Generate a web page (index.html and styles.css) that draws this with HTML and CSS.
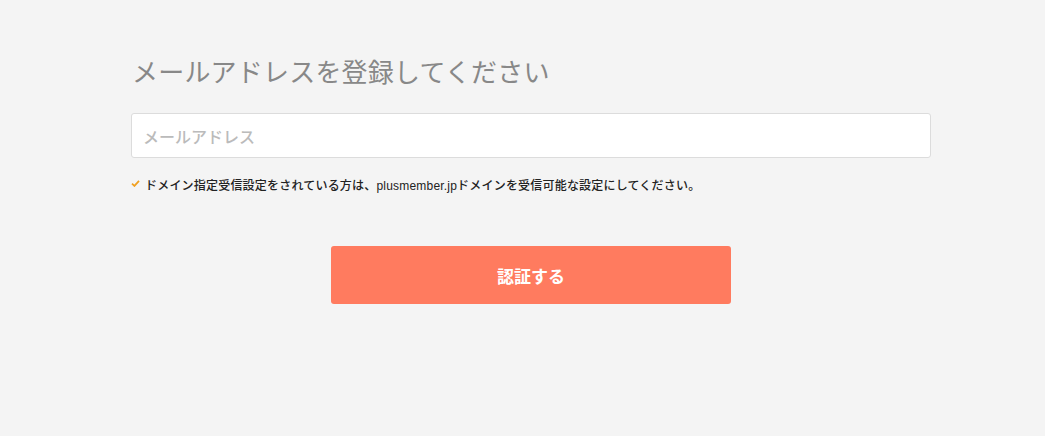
FILE: index.html
```html
<!DOCTYPE html>
<html lang="ja">
<head>
    <meta charset="UTF-8">
    <meta name="viewport" content="width=device-width, initial-scale=1.0">
    <title>メールアドレス登録</title>
    <link rel="stylesheet" href="styles.css">
</head>
<body>
    <div class="container">
        <h1 class="title">メールアドレスを登録してください</h1>

        <input class="email-input" type="email" placeholder="メールアドレス">

        <p class="note">
            <svg class="check" viewBox="0 0 10 8" width="9" height="7"><path d="M1 4.2 L3.8 6.8 L9 1" fill="none" stroke="#f0a020" stroke-width="2"/></svg>
            ドメイン指定受信設定をされている方は、plusmember.jpドメインを受信可能な設定にしてください。
        </p>

        <div class="actions">
            <button class="button">認証する</button>
        </div>
    </div>
</body>
</html>
```

FILE: styles.css
```css
body {
    font-family: "Noto Sans CJK JP", "Noto Sans", sans-serif;
    margin: 0;
    padding: 0 0 0 17px;
    background: #f4f4f4;
}
.container {
    width: 800px;
    margin: 0 auto;
    padding-top: 52px;
}
.title {
    margin: 0 0 23px 1px;
    font-size: 26px;
    font-weight: 400;
    line-height: 38px;
    letter-spacing: 0.2px;
    color: #888;
}
.email-input {
    display: block;
    box-sizing: border-box;
    width: 800px;
    height: 45px;
    padding: 0 11px;
    border: 1px solid #dcdcdc;
    border-radius: 3px;
    background: white;
    font-family: inherit;
    font-size: 16px;
    font-weight: 500;
    outline: none;
}
.email-input::placeholder {
    color: #bbb;
}
.note {
    display: flex;
    align-items: center;
    gap: 5px;
    margin: 18px 0 0;
    font-family: "Liberation Sans", "Noto Sans CJK JP", sans-serif;
    font-size: 12px;
    font-weight: 500;
    line-height: 20px;
    letter-spacing: 0.2px;
    color: #222;
}
.check {
    flex: none;
    margin-top: -6px;
}
.actions {
    display: flex;
    justify-content: center;
    margin-top: 50px;
}
.button {
    width: 400px;
    height: 58px;
    background: #ff7b5f;
    color: white;
    border: none;
    border-radius: 3px;
    font-family: inherit;
    font-size: 17px;
    font-weight: 700;
    cursor: pointer;
}
```
